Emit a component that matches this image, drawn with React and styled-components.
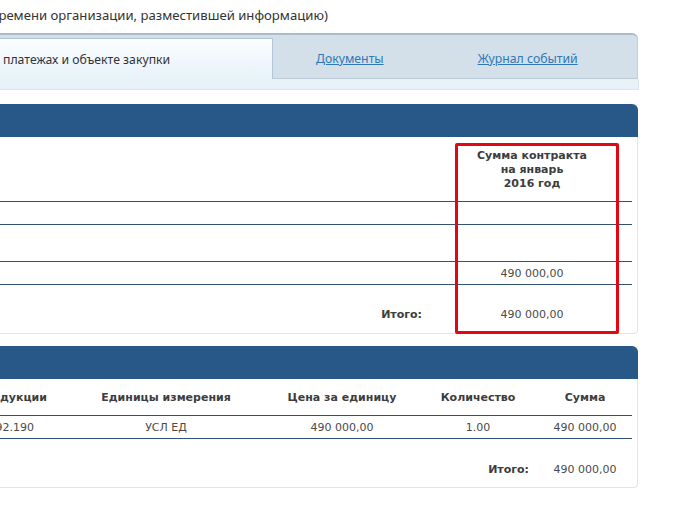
import React from "react"
import styled, { createGlobalStyle } from "styled-components"

const Global = createGlobalStyle`
  html, body {
    margin: 0;
    background: #fff;
    overflow: hidden;
  }
  body {
    font-family: "DejaVu Sans", sans-serif;
    color: #3f3f3f;
  }
`

const Page = styled.div`
  width: 681px;
  height: 514px;
  overflow: hidden;
`

const Content = styled.div`
  width: 638px;
  position: relative;
`

const Title = styled.div`
  height: 33px;
  font-family: "Noto Sans", sans-serif;
  font-size: 13.13px;
  line-height: 30px;
  color: #333;
  white-space: nowrap;
  margin-left: -9px;
`

const TabStrip = styled.div`
  display: flex;
  height: 46px;
  background: #d3dfe9;
  border-top: 2px solid #a9bccb;
  border-radius: 0 6px 0 0;
  box-sizing: border-box;
  padding-top: 3px;
  box-shadow: inset -1px 0 0 #c3d1dd, inset 0 -1px 0 #bccbd8;
`

const ActiveTab = styled.div`
  width: 273px;
  box-sizing: border-box;
  background: linear-gradient(#fafdff, #e8f2f9);
  border-top: 1px solid #b4c6d6;
  border-right: 1px solid #b4c6d6;
  font-family: "Noto Sans", sans-serif;
  font-size: 12.25px;
  line-height: 41px;
  color: #333;
  padding-left: 3px;
  white-space: nowrap;
`

const TabLink = styled.a`
  display: block;
  font-family: "Noto Sans", sans-serif;
  font-size: 12.25px;
  line-height: 41px;
  color: #2f78b5;
  text-decoration: underline;
  white-space: nowrap;
  margin-left: ${(p) => p.$gap}px;
`

const TabFooter = styled.div`
  width: 639px;
  height: 11px;
  box-sizing: border-box;
  background: #e8f2f9;
  border-bottom: 1px solid #dfe6ea;
  border-right: 1px solid #dfe6ea;
  margin-bottom: 14px;
`

const Panel = styled.section`
  box-sizing: border-box;
  height: ${(p) => p.$height}px;
  margin-bottom: 12px;
  border-right: 1px solid #dfe6ea;
  border-bottom: 1px solid #dfe6ea;
  border-radius: 0 6px 4px 0;
`

const PanelHeader = styled.div`
  height: 33px;
  margin-right: -1px;
  background: #285887;
  border-radius: 0 6px 0 0;
`

const Rows = styled.div`
  width: 632px;
`

const Row = styled.div`
  display: grid;
  grid-template-columns: ${(p) => p.$columns};
  align-items: center;
  box-sizing: border-box;
  height: ${(p) => p.$height}px;
  padding-top: ${(p) => p.$top || 0}px;
  border-bottom: ${(p) => (p.$plain ? "none" : "1px solid #2f5370")};
  font-size: 11px;
  white-space: nowrap;
`

const HeadCell = styled.div`
  font-weight: bold;
  text-align: center;
  color: #3d3d3d;
  line-height: 14px;
`

const Cell = styled.div`
  text-align: center;
  color: #4a4a4a;
`

// first column of the second table, cut by the left edge of the page
const ClippedHead = styled(HeadCell)`
  margin-left: -60px;
  text-align: right;
  padding-right: 19px;
`

const ClippedCell = styled(Cell)`
  margin-left: -60px;
  text-align: right;
  padding-right: 32px;
`

const TotalLabel = styled.div`
  font-weight: bold;
  text-align: right;
  color: #3d3d3d;
  padding-right: ${(p) => p.$pad}px;
`

const Highlight = styled.div`
  position: absolute;
  left: 455px;
  top: 143px;
  width: 164px;
  height: 191px;
  box-sizing: border-box;
  border: 3px solid #e30613;
  border-radius: 2px;
`

const contractColumns = "1fr 200px"
const goodsColumns = "66px 200px 152px 120px 94px"

export default function App() {
  return (
    <Page>
      <Global />
      <Content>
        <Title>времени организации, разместившей информацию)</Title>
        <TabStrip>
          <ActiveTab>платежах и объекте закупки</ActiveTab>
          <TabLink $gap={43}>Документы</TabLink>
          <TabLink $gap={94}>Журнал событий</TabLink>
        </TabStrip>
        <TabFooter />

        <Panel $height={230}>
          <PanelHeader />
          <Rows>
            <Row $columns={contractColumns} $height={65} $top={1}>
              <div />
              <HeadCell>
                Сумма контракта
                <br />
                на январь
                <br />
                2016 год
              </HeadCell>
            </Row>
            <Row $columns={contractColumns} $height={23} />
            <Row $columns={contractColumns} $height={37} />
            <Row $columns={contractColumns} $height={23}>
              <div />
              <Cell>490 000,00</Cell>
            </Row>
            <Row $columns={contractColumns} $height={49} $top={10} $plain>
              <TotalLabel $pad={10}>Итого:</TotalLabel>
              <Cell>490 000,00</Cell>
            </Row>
          </Rows>
        </Panel>

        <Panel $height={142}>
          <PanelHeader />
          <Rows>
            <Row $columns={goodsColumns} $height={37} $top={1}>
              <ClippedHead>продукции</ClippedHead>
              <HeadCell>Единицы измерения</HeadCell>
              <HeadCell>Цена за единицу</HeadCell>
              <HeadCell>Количество</HeadCell>
              <HeadCell>Сумма</HeadCell>
            </Row>
            <Row $columns={goodsColumns} $height={23}>
              <ClippedCell>92.190</ClippedCell>
              <Cell>УСЛ ЕД</Cell>
              <Cell>490 000,00</Cell>
              <Cell>1.00</Cell>
              <Cell>490 000,00</Cell>
            </Row>
            <Row $columns="1fr 94px" $height={60} $plain>
              <TotalLabel $pad={9}>Итого:</TotalLabel>
              <Cell>490 000,00</Cell>
            </Row>
          </Rows>
        </Panel>
        <Highlight />
      </Content>
    </Page>
  )
}
